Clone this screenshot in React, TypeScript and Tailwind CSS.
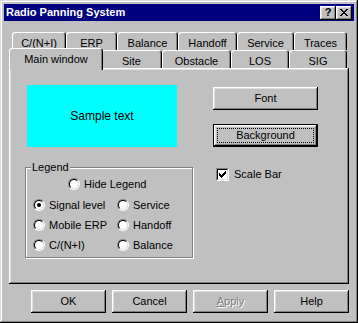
import type { ReactNode } from 'react';

const bevel =
  'shadow-[inset_-1px_-1px_#000,inset_1px_1px_#fff,inset_-2px_-2px_#808080,inset_2px_2px_#dfdfdf]';

function Tab({ label, w, selected = false }: { label: string; w: number; selected?: boolean }) {
  if (selected) {
    return (
      <div
        className="relative z-10 -mt-[2px] -ml-[2px] -mr-[2px] h-[22px] bg-[#c0c0c0] rounded-t-[3px] shadow-[inset_1px_1px_#fff,inset_-1px_0_#000,inset_-2px_0_#808080] flex justify-center pt-[3px] shrink-0"
        style={{ width: w + 4 }}
      >
        {label}
      </div>
    );
  }
  return (
    <div
      className="h-[18px] bg-[#c0c0c0] rounded-t-[3px] shadow-[inset_1px_1px_#fff,inset_-1px_0_#000,inset_-2px_0_#808080] flex justify-center pt-[3px] shrink-0"
      style={{ width: w }}
    >
      {label}
    </div>
  );
}

function Radio({ label, checked = false }: { label: string; checked?: boolean }) {
  return (
    <div className="flex items-center gap-[4px] h-[20px]">
      <div className="w-[12px] h-[12px] rounded-full border border-t-[#808080] border-l-[#808080] border-b-white border-r-white shrink-0">
        <div className="w-full h-full rounded-full border border-t-black border-l-black border-b-[#dfdfdf] border-r-[#dfdfdf] bg-white flex items-center justify-center">
          {checked && <div className="w-[4px] h-[4px] rounded-full bg-black" />}
        </div>
      </div>
      <span>{label}</span>
    </div>
  );
}

function Button({ children, className = '' }: { children: ReactNode; className?: string }) {
  return (
    <div className={`w-[75px] h-[23px] bg-[#c0c0c0] ${bevel} flex items-center justify-center ${className}`}>
      {children}
    </div>
  );
}

function Pixels({ w, h, px }: { w: number; h: number; px: string[] }) {
  const rects: ReactNode[] = [];
  px.forEach((row, y) =>
    row.split('').forEach((c, x) => {
      if (c === 'X') rects.push(<rect key={`${x}-${y}`} x={x} y={y} width={1} height={1} />);
    }),
  );
  return (
    <svg width={w} height={h} viewBox={`0 0 ${w} ${h}`} shapeRendering="crispEdges" fill="#000">
      {rects}
    </svg>
  );
}

const closeGlyph = ['XX....XX', '.XX..XX.', '..XXXX..', '...XX...', '..XXXX..', '.XX..XX.', 'XX....XX'];
const checkGlyph = ['......X', '.....XX', 'X...XXX', 'XX.XXX.', 'XXXXX..', '.XXX...', '..X....'];

export default function App() {
  return (
    <div className="w-[358px] h-[323px] bg-[#c0c0c0] p-[4px] flex flex-col text-[11px] text-black font-['Liberation_Sans',Arial,sans-serif] shadow-[inset_-1px_-1px_#000,inset_1px_1px_#dfdfdf,inset_-2px_-2px_#808080,inset_2px_2px_#fff]">
      {/* title bar */}
      <div className="h-[17px] bg-[#000080] flex items-center justify-between pl-[2px] pr-[2px]">
        <span className="text-white font-bold text-[11px] leading-none">Radio Panning System</span>
        <div className="flex">
          <div className={`w-[16px] h-[14px] bg-[#c0c0c0] ${bevel} flex items-center justify-center font-bold text-[11px] leading-none`}>
            ?
          </div>
          <div className={`w-[16px] h-[14px] bg-[#c0c0c0] ${bevel} flex items-center justify-center`}>
            <Pixels w={8} h={7} px={closeGlyph} />
          </div>
        </div>
      </div>

      {/* tab rows */}
      <div className="mt-[11px] ml-[8px] flex h-[18px]">
        <Tab label="C/(N+I)" w={54} />
        <Tab label="ERP" w={51} />
        <Tab label="Balance" w={61} />
        <Tab label="Handoff" w={59} />
        <Tab label="Service" w={57} />
        <Tab label="Traces" w={53} />
      </div>
      <div className="ml-[7px] flex items-start h-[18px]">
        <Tab label="Main window" w={90} selected />
        <Tab label="Site" w={61} />
        <Tab label="Obstacle" w={69} />
        <Tab label="LOS" w={58} />
        <Tab label="SIG" w={58} />
      </div>

      {/* panel */}
      <div className="ml-[5px] w-[340px] h-[216px] shrink-0 shadow-[inset_-1px_-1px_#000,inset_1px_1px_#fff,inset_-2px_-2px_#808080,inset_2px_2px_#dfdfdf] flex pt-[17px] pl-[16px]">
        <div className="flex flex-col">
          <div className="ml-[2px] w-[150px] h-[62px] bg-[#00ffff] flex items-center justify-center text-[12px]">
            Sample text
          </div>
          <div className="relative mt-[20px] w-[168px] h-[91px] border border-[#808080] shadow-[inset_1px_1px_#fff,1px_1px_#fff] pt-[6px] pl-[7px]">
            <span className="absolute -top-[7px] left-[5px] px-[1px] bg-[#c0c0c0] leading-[13px]">Legend</span>
            <div className="ml-[35px]">
              <Radio label="Hide Legend" />
            </div>
            <div className="mt-[1px] flex">
              <div className="w-[84px] flex flex-col">
                <Radio label="Signal level" checked />
                <Radio label="Mobile ERP" />
                <Radio label="C/(N+I)" />
              </div>
              <div className="flex flex-col">
                <Radio label="Service" />
                <Radio label="Handoff" />
                <Radio label="Balance" />
              </div>
            </div>
          </div>
        </div>

        <div className="ml-[20px] pt-[2px] flex flex-col">
          <div className={`w-[105px] h-[23px] bg-[#c0c0c0] ${bevel} flex items-center justify-center`}>Font</div>
          <div className="mt-[14px] w-[105px] h-[23px] border border-black">
            <div className={`w-full h-full bg-[#c0c0c0] ${bevel} p-[3px]`}>
              <div className="w-full h-full border border-dotted border-black flex items-center justify-center">
                Background
              </div>
            </div>
          </div>
          <div className="mt-[19px] ml-[3px] flex items-center gap-[5px]">
            <div className="w-[13px] h-[13px] border border-t-[#808080] border-l-[#808080] border-b-white border-r-white">
              <div className="w-full h-full border border-t-black border-l-black border-b-[#dfdfdf] border-r-[#dfdfdf] bg-white flex items-center justify-center">
                <Pixels w={7} h={7} px={checkGlyph} />
              </div>
            </div>
            <span>Scale Bar</span>
          </div>
        </div>
      </div>

      {/* dialog buttons */}
      <div className="mt-[6px] ml-[27px] flex gap-[6px]">
        <Button>OK</Button>
        <Button>Cancel</Button>
        <Button className="text-[#808080] [text-shadow:1px_1px_0_#fff]">
          <span>
            <u>A</u>pply
          </span>
        </Button>
        <Button>Help</Button>
      </div>
    </div>
  );
}
